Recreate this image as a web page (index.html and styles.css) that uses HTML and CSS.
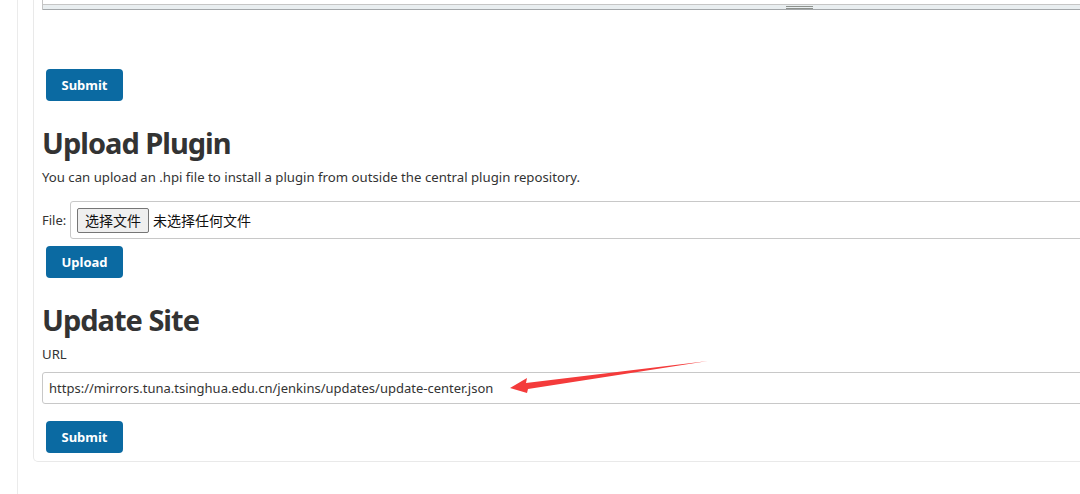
FILE: index.html
```html
<!DOCTYPE html>
<html lang="zh-CN">

<head>
    <meta charset="UTF-8">
    <title>Advanced - Plugin Manager</title>
    <link rel="stylesheet" href="styles.css">
</head>

<body>
    <div class="page">
        <div class="side-panel"></div>
        <div class="main-panel">
            <!-- tail of the proxy settings textarea -->
            <div class="textarea-tail">
                <div class="scrollbar"><span class="thumb"></span></div>
            </div>
            <button class="jenkins-button" type="submit">Submit</button>

            <h2>Upload Plugin</h2>
            <p class="help">You can upload an .hpi file to install a plugin from outside the central plugin repository.</p>
            <div class="file-row">
                <span class="file-label">File:</span>
                <div class="file-box">
                    <span class="file-btn">选择文件</span>
                    <span class="file-name">未选择任何文件</span>
                </div>
            </div>
            <button class="jenkins-button" type="submit">Upload</button>

            <h2>Update Site</h2>
            <label class="field-label" for="site">URL</label>
            <div class="url-wrap">
                <input class="url-input" id="site" type="text" value="https://mirrors.tuna.tsinghua.edu.cn/jenkins/updates/update-center.json">
                <!-- red annotation arrow -->
                <svg class="arrow" width="220" height="40" viewBox="0 0 220 40">
                    <polygon points="8,27 25,17 24,22 206,0 26,28 25,32" fill="#f43b3b" />
                </svg>
            </div>
            <button class="jenkins-button" type="submit">Submit</button>
        </div>
    </div>
</body>

</html>
```

FILE: styles.css
```css
/* styles.css */
body {
    margin: 0;
    padding: 0;
    background-color: #fff;
    font-family: "Noto Sans", "Noto Sans CJK SC", sans-serif;
    color: #333;
    overflow: hidden;
}

.page {
    display: flex;
    height: 494px;
}

.side-panel {
    width: 17px;
    flex-shrink: 0;
    border-right: 1px solid #ebebeb;
    margin-right: 15px;
}

.main-panel {
    width: 1200px;
    flex-shrink: 0;
    align-self: flex-start;
    padding: 0 0 8px 8px;
    border: 1px solid #e9e9e9;
    border-top: none;
    border-radius: 0 0 0 5px;
}

.textarea-tail {
    height: 10px;
    border-left: 1px solid #c4c4c4;
    display: flex;
    flex-direction: column;
    justify-content: flex-end;
}

.scrollbar {
    height: 4px;
    border-top: 1px solid #c6c6c6;
    border-bottom: 1px solid #a3a7aa;
    background-color: #e9eef0;
    position: relative;
}

.thumb {
    position: absolute;
    left: 743px;
    top: 1px;
    width: 27px;
    height: 1px;
    border-top: 1px solid #8d918d;
    border-bottom: 1px solid #8d918d;
}

.jenkins-button {
    display: block;
    width: 77px;
    height: 32px;
    margin-left: 4px;
    background-color: #0b6aa2;
    color: #fff;
    border: none;
    border-radius: 4px;
    font-family: inherit;
    font-size: 13px;
    font-weight: bold;
    cursor: pointer;
}

.textarea-tail + .jenkins-button {
    margin-top: 59px;
}

h2 {
    font-size: 29px;
    line-height: 36px;
    letter-spacing: -1px;
    margin: 0;
    font-weight: bold;
    color: #333;
}

.jenkins-button + h2 {
    margin-top: 24px;
}

.help {
    margin: 6px 0 0 0;
    font-size: 13.2px;
    line-height: 20px;
}

.file-row {
    display: flex;
    align-items: center;
    margin-top: 14px;
}

.file-label {
    font-size: 13px;
    width: 28px;
}

.file-box {
    flex-grow: 1;
    height: 36px;
    border: 1px solid #c8c8c8;
    border-radius: 3px;
    display: flex;
    align-items: center;
    padding-left: 6px;
}

.file-btn {
    display: inline-block;
    box-sizing: border-box;
    height: 25px;
    line-height: 23px;
    padding: 0 7px;
    background-color: #efefef;
    border: 1px solid #767676;
    border-radius: 2px;
    font-size: 14px;
    color: #111;
}

.file-name {
    margin-left: 4px;
    font-size: 14px;
    color: #111;
}

.file-row + .jenkins-button {
    margin-top: 7px;
}

.field-label {
    display: block;
    margin-top: 6px;
    font-size: 13.2px;
    line-height: 20px;
}

.url-wrap {
    position: relative;
    margin-top: 8px;
}

.url-input {
    display: block;
    box-sizing: border-box;
    width: 100%;
    height: 32px;
    border: 1px solid #c8c8c8;
    border-radius: 3px;
    padding: 0 6px;
    font-family: inherit;
    font-size: 13px;
    color: #333;
}

.arrow {
    position: absolute;
    left: 460px;
    top: -11px;
}

.url-wrap + .jenkins-button {
    margin-top: 17px;
}
```
